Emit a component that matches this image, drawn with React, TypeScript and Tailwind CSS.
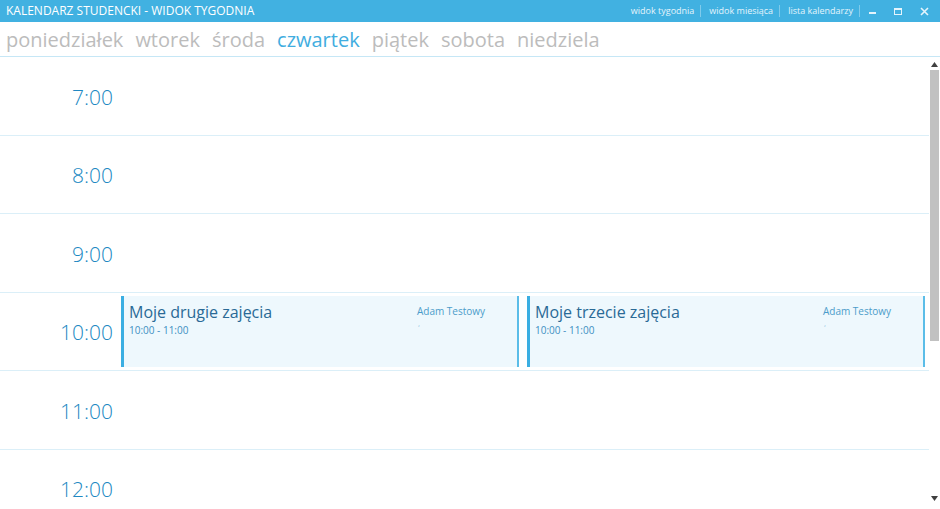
import React from "react";

const days = ["poniedziałek", "wtorek", "środa", "czwartek", "piątek", "sobota", "niedziela"];
const hours = ["7:00", "8:00", "9:00", "10:00", "11:00", "12:00"];

const events = [
    { title: "Moje drugie zajęcia", time: "10:00 - 11:00", who: "Adam Testowy" },
    { title: "Moje trzecie zajęcia", time: "10:00 - 11:00", who: "Adam Testowy" },
];

function EventCard({ title, time, who }: { title: string; time: string; who: string }) {
    return (
        <div className="flex-1 flex bg-[#eef8fd] border-l-[3px] border-r-2 border-l-[#3aaee2] border-r-[#5bbde8] h-[71px] pl-[5px]">
            <div className="flex-1 flex flex-col pt-[5px]">
                <span className="text-[16px] leading-[22px] text-[#2a6a96]">{title}</span>
                <span className="text-[10px] leading-[12px] text-[#3d8fc2] mt-[1px]">{time}</span>
            </div>
            <div className="w-[100px] flex flex-col pt-[9px]">
                <span className="text-[10px] leading-[12px] text-[#4b9cca]">{who}</span>
                <span className="text-[8px] leading-[12px] text-[#8fc3df] pl-[1px]">,</span>
            </div>
        </div>
    );
}

export default function App() {
    return (
        <div className="w-[940px] h-[509px] overflow-hidden bg-white flex flex-col" style={{ fontFamily: '"Open Sans", "Noto Sans", sans-serif' }}>
            {/* Title bar */}
            <div className="h-[22px] bg-[#41b1e1] flex items-center pl-[6px] shrink-0">
                <span className="text-white text-[12px] flex-1">KALENDARZ STUDENCKI - WIDOK TYGODNIA</span>
                <div className="flex items-center text-[#e4f4fc] text-[9px]">
                    <span className="pr-[6px]">widok tygodnia</span>
                    <span className="w-px h-[12px] bg-[#7fcbec]" />
                    <span className="pl-[8px] pr-[6px]">widok miesiąca</span>
                    <span className="w-px h-[12px] bg-[#7fcbec]" />
                    <span className="pl-[8px] pr-[6px]">lista kalendarzy</span>
                    <span className="w-px h-[12px] bg-[#7fcbec]" />
                </div>
                <div className="flex items-center w-[80px] justify-around pr-[2px]">
                    <span className="w-[7px] h-[2px] bg-[#e4f4fc] mt-[4px]" />
                    <span className="w-[8px] h-[7px] border border-[#e4f4fc] border-t-2" />
                    <svg width="9" height="9" viewBox="0 0 9 9">
                        <path d="M1 1L8 8M8 1L1 8" stroke="#e4f4fc" strokeWidth="1.6" />
                    </svg>
                </div>
            </div>

            {/* Day tabs */}
            <div className="h-[35px] shrink-0 flex items-center gap-[12px] pl-[6px] pt-[2px] border-b border-[#c6e7f6] text-[20px] text-[#bcbcbc]">
                {days.map((d) => (
                    <span key={d} className={d === "czwartek" ? "text-[#41ade0]" : ""}>
                        {d}
                    </span>
                ))}
            </div>

            {/* Body */}
            <div className="flex-1 flex min-h-0">
                <div className="flex-1 overflow-hidden">
                    {hours.map((h) => (
                        <div key={h} className="h-[78.5px] border-b border-[#dbeff8] flex items-center">
                            <div className="w-[115px] shrink-0 text-right pr-[2px] pt-[3px] text-[21px] font-light text-[#2088c2]">
                                {h}
                            </div>
                            {h === "10:00" && (
                                <div className="flex-1 flex gap-[8px] pl-[6px] pr-[4px]">
                                    {events.map((e) => (
                                        <EventCard key={e.title} {...e} />
                                    ))}
                                </div>
                            )}
                        </div>
                    ))}
                </div>

                {/* Scrollbar */}
                <div className="w-[11px] shrink-0 flex flex-col items-center">
                    <svg width="7" height="5" viewBox="0 0 7 5" className="mt-[5px]">
                        <path d="M3.5 0L7 5H0Z" fill="#404040" />
                    </svg>
                    <div className="w-[9px] h-[271px] bg-[#c1c1c1] mt-[3px]" />
                    <div className="flex-1" />
                    <svg width="7" height="5" viewBox="0 0 7 5" className="mb-[8px]">
                        <path d="M0 0H7L3.5 5Z" fill="#404040" />
                    </svg>
                </div>
            </div>
        </div>
    );
}
